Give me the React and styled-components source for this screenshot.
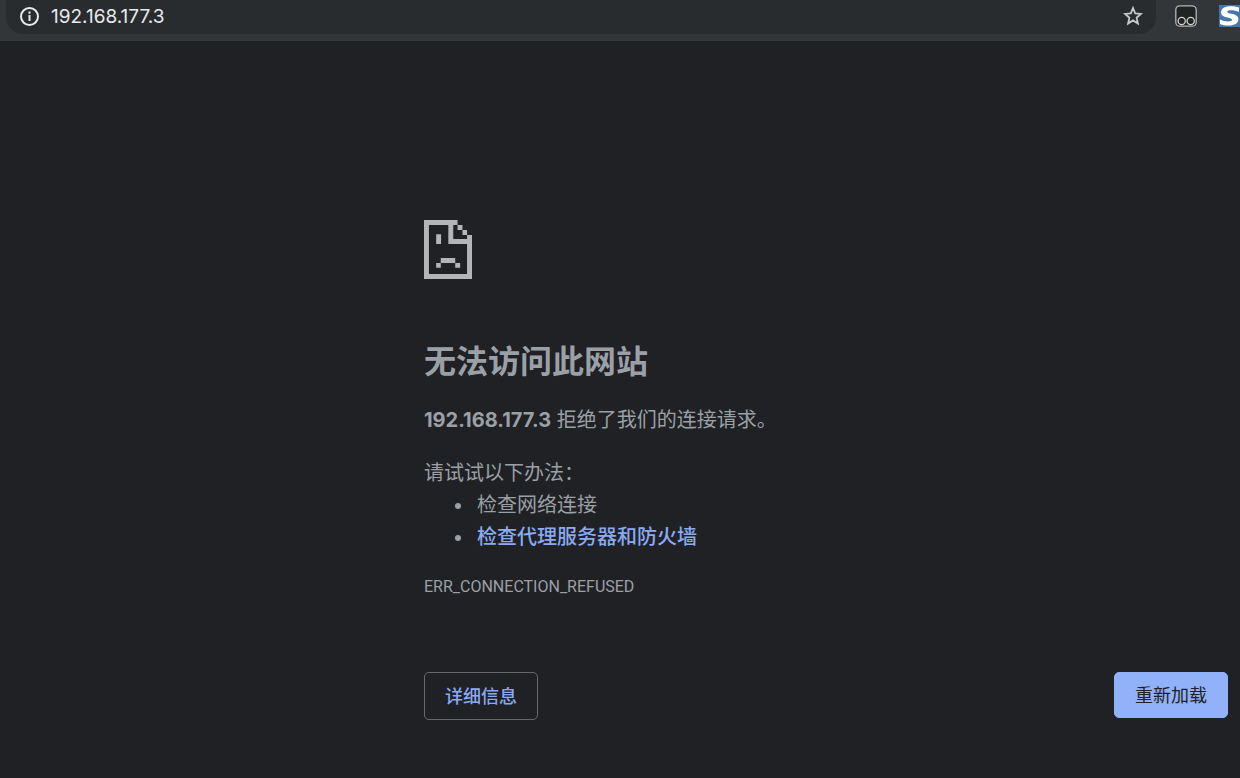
import React from "react";
import styled, { createGlobalStyle } from "styled-components";

const GlobalStyle = createGlobalStyle`
  * {
    box-sizing: border-box;
  }
  body {
    margin: 0;
    background: #202124;
    color: #9aa0a6;
    font-family: Inter, "Noto Sans CJK SC", sans-serif;
  }
`;

const Page = styled.div`
  display: flex;
  flex-direction: column;
  min-height: 100vh;
  overflow: hidden;
  border-bottom: 1px solid #120d10;
`;

const Toolbar = styled.header`
  display: flex;
  align-items: flex-start;
  height: 41px;
  padding-left: 6px;
  background: #323639;
  border-bottom: 1px solid #36393c;
`;

const AddressBar = styled.div`
  display: flex;
  flex: 1;
  align-items: center;
  height: 34px;
  padding: 0 13px 2px 13px;
  border-radius: 0 0 17px 17px;
  background: #282c2f;
`;

const AddressInput = styled.input`
  flex: 1;
  min-width: 0;
  height: 24px;
  margin-left: 11px;
  padding: 0;
  border: 0;
  outline: 0;
  background: transparent;
  color: #e8eaed;
  font-family: inherit;
  font-size: 19px;
`;

const IconButton = styled.button`
  display: flex;
  flex: none;
  padding: 0;
  border: 0;
  background: transparent;
  color: ${props => props.color || "#c6c9cc"};
`;

const Extensions = styled.div`
  display: flex;
  flex: none;
  align-items: center;
  gap: 21px;
  height: 32px;
  padding-left: 18px;
`;

const Main = styled.main`
  padding: 179px 12px 58px 424px;
`;

const Title = styled.h1`
  margin: 61px 0 0;
  font-size: 32px;
  font-weight: 600;
  line-height: 43px;
`;

const Text = styled.p`
  margin: 21px 0 0;
  font-size: 20px;
  line-height: 32px;
`;

const Suggestions = styled.ul`
  margin: 0;
  padding-left: 50px;
  font-size: 20px;
  line-height: 32px;

  li {
    padding-left: 3px;
  }
`;

const Link = styled.a`
  color: #8aabf2;
  font-weight: 500;
  text-decoration: none;
`;

const ErrorCode = styled.div`
  margin-top: 22px;
  font-family: Roboto, sans-serif;
  font-size: 16px;
  line-height: 24px;
`;

const Actions = styled.div`
  display: flex;
  align-items: flex-start;
  justify-content: space-between;
  margin-top: 73px;
`;

const Button = styled.button`
  height: ${props => (props.$primary ? 46 : 48)}px;
  padding: 2px 20px 0;
  border: 1px solid ${props => (props.$primary ? "#91b2f8" : "#66696d")};
  border-radius: 5px;
  background: ${props => (props.$primary ? "#91b2f8" : "transparent")};
  color: ${props => (props.$primary ? "#202124" : "#8aabf2")};
  font-family: inherit;
  font-size: 18px;
  font-weight: ${props => (props.$primary ? 400 : 500)};
  line-height: 24px;
`;

const InfoIcon = () => (
  <svg width="21" height="21" viewBox="0 0 21 21" fill="none">
    <circle cx="10.5" cy="10.5" r="8.5" stroke="currentColor" strokeWidth="2" />
    <path d="M10.5 9v6M10.5 5.5v2.2" stroke="currentColor" strokeWidth="2" />
  </svg>
);

const StarIcon = () => (
  <svg width="20" height="20" viewBox="0 0 20 20" fill="none">
    <path
      d="M10 2l2.2 5.4 5.8.5-4.4 3.8 1.3 5.8-4.9-3.1-4.9 3.1 1.3-5.8L2 7.900l5.800-.5z"
      stroke="currentColor"
      strokeWidth="1.8"
    />
  </svg>
);

const MonkeyIcon = () => (
  <svg width="24" height="24" viewBox="0 0 24 24" fill="none">
    <rect x="1.8" y="1.8" width="20.4" height="20.4" rx="4" fill="#222323" stroke="#b5b6b7" strokeWidth="1.3" />
    <circle cx="7.7" cy="17" r="3.6" stroke="#d0d0d0" strokeWidth="1.3" />
    <circle cx="16.7" cy="17" r="3.6" stroke="#d0d0d0" strokeWidth="1.3" />
  </svg>
);

const SIcon = () => (
  <svg width="21" height="22" viewBox="0 0 21 22">
    <path d="M0 0h21v22H0z" fill="#4577ad" />
    <path
      d="M20 2.500v4.500C17.500 5.800 14.500 5.200 12 5.200c-2.600 0-3.700.5-3.700 1.500 0 2.800 11.200 1 11.200 7.300 0 4.200-3.800 6.500-9.500 6.500-3.500 0-6.800-.5-9-1.500v-4.500c2.500 1.200 5.500 1.900 8.200 1.900 2.600 0 3.800-.5 3.800-1.600C13 12 2 13.500 2 7.500c0-4 3.500-6.300 9.200-6.300 3 0 6.300.4 8.800 1.300z"
      fill="#fff"
    />
  </svg>
);

// sad page, drawn in blocks
const SadPage = () => (
  <svg width="48" height="59" viewBox="0 0 146 177" preserveAspectRatio="none" fill="#b4b5b6" display="block">
    <path d="M0 0h102v15H89v42h42V45h15v132H0zM15 15v147h116V72H74V15z" fillRule="evenodd" />
    <path d="M102 15h15v15h-15zM117 30h14v15h-14z" />
    <path d="M37 43h15v29H37zM51 114h44v15H51zM37 129h14v14H37zM95 129h15v14H95z" />
  </svg>
);

function App() {
  return (
    <Page>
      <GlobalStyle />
      <Toolbar>
        <AddressBar>
          <IconButton aria-label="网站信息" color="#e8eaed">
            <InfoIcon />
          </IconButton>
          <AddressInput aria-label="地址" defaultValue="192.168.177.3" />
          <IconButton aria-label="收藏">
            <StarIcon />
          </IconButton>
        </AddressBar>
        <Extensions>
          <IconButton aria-label="脚本">
            <MonkeyIcon />
          </IconButton>
          <IconButton aria-label="扩展程序">
            <SIcon />
          </IconButton>
        </Extensions>
      </Toolbar>
      <Main>
        <SadPage />
        <Title>无法访问此网站</Title>
        <Text>
          <strong>192.168.177.3</strong> 拒绝了我们的连接请求。
        </Text>
        <Text>请试试以下办法：</Text>
        <Suggestions>
          <li>检查网络连接</li>
          <li>
            <Link href="#proxy">检查代理服务器和防火墙</Link>
          </li>
        </Suggestions>
        <ErrorCode>ERR_CONNECTION_REFUSED</ErrorCode>
        <Actions>
          <Button>详细信息</Button>
          <Button $primary>重新加载</Button>
        </Actions>
      </Main>
    </Page>
  );
}

export default App;
